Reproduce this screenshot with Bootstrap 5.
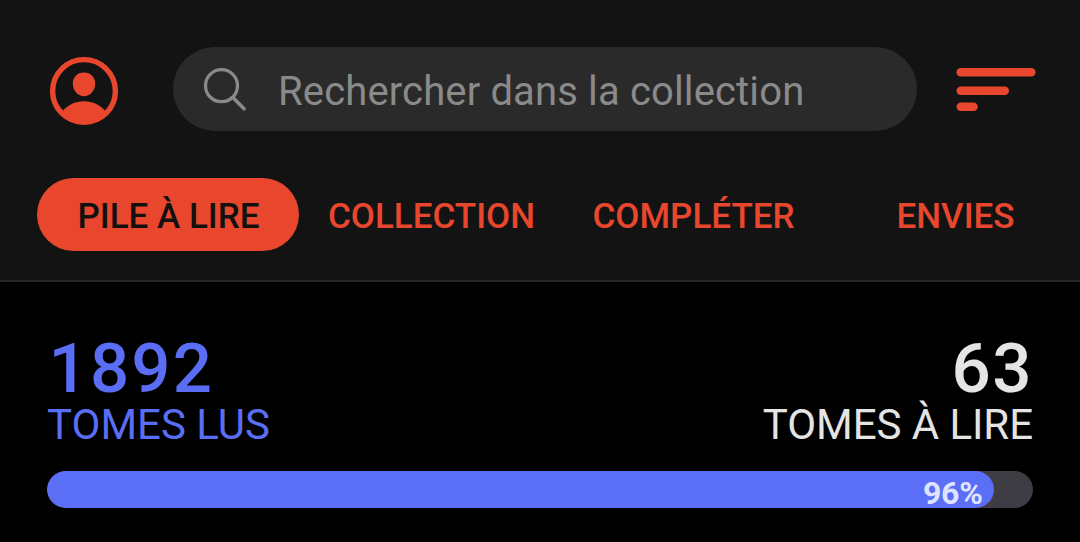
<!DOCTYPE html>
<html lang="fr">
<head>
<meta charset="utf-8">
<meta name="viewport" content="width=device-width, initial-scale=1">
<title>Pile à lire</title>
<link href="https://cdn.jsdelivr.net/npm/bootstrap@5.3.0/dist/css/bootstrap.min.css" rel="stylesheet">
<style>
  :root { --accent: #e8472e; --read: #5a6ef5; }
  body { background: #000; font-family: Roboto, "Liberation Sans", sans-serif; height: 542px; }
  .top-area { background: #131313; height: 282px; border-bottom: 2px solid #262626; padding-top: 47px; }
  .search-row { height: 84px; padding: 0 44px 0 49px; }
  .search-box { background: #2a2a2a; width: 744px; height: 84px; margin-left: 54px; padding-left: 30px; }
  .search-box input { color: #8a8a8a; font-size: 40px; line-height: 48px; letter-spacing: .14px; padding: 5px 0 0; margin-left: 31px; }
  .search-box input::placeholder { color: #8a8a8a; opacity: 1; }
  .tabs-row { margin: 47px 0 0 37px; }
  .tabs-row .nav-link { width: 262px; height: 73px; line-height: 73px; padding: 2px 0 0 3px; font-size: 35px; font-weight: 500; color: var(--accent); text-align: center; }
  .tabs-row .nav-link.active { background: var(--accent); color: #131010; padding-left: 1px; }
  .stats { padding: 55px 47px 0; }
  .figure-num { font-size: 69px; line-height: 64px; font-weight: 500; letter-spacing: 2.2px; }
  .figure-label { font-size: 42px; line-height: 48px; }
  .read { color: var(--read); }
  .read .figure-num { padding-left: 1.5px; }
  .unread { color: #e4e4e4; }
  .unread .figure-num { letter-spacing: 1.5px; }
  .unread .figure-label { letter-spacing: -.06px; }
  .progress { height: 37px; margin-top: 22px; background: #3e3d43; border-radius: 19px; }
  .progress-bar { background: #5a6ff6; border-radius: 19px; font-size: 32px; line-height: 37px; font-weight: 700; color: #dfe3ff; text-align: right; letter-spacing: -.3px; padding: 7px 11px 0 0; }
</style>
</head>
<body class="overflow-hidden">
<header class="top-area">
  <div class="search-row d-flex align-items-center">
    <svg class="flex-shrink-0 mt-1" width="70" height="70" viewBox="0 0 70 70" aria-label="Profil">
      <circle cx="35" cy="35" r="31.4" fill="none" stroke="#e8472e" stroke-width="5.4"/>
      <path fill="#e8472e" d="M35 16.500c6.700 0 11.200 4.800 11.200 10.800 0 7-4.700 12.900-11.200 12.900s-11.200-5.900-11.200-12.900c0-6 4.500-10.800 11.200-10.800zM13.200 55.500C18.500 49 26 45.200 35 45.200S51.500 49 56.800 55.500C51 63.500 44 67.500 35 67.500S19 63.500 13.200 55.500z"/>
    </svg>
    <div class="search-box d-flex align-items-center rounded-pill flex-shrink-0">
      <svg class="flex-shrink-0" width="44" height="44" viewBox="0 0 44 44" fill="none" stroke="#8a8a8a" stroke-linecap="round" aria-hidden="true">
        <circle cx="18.5" cy="18.7" r="16" stroke-width="3.3"/>
        <path d="M30 30.500L41 41.700" stroke-width="3.6"/>
      </svg>
      <input class="form-control-plaintext" type="text" placeholder="Rechercher dans la collection">
    </div>
    <svg class="ms-auto flex-shrink-0" width="80" height="44" viewBox="0 0 80 44" fill="#e8472e" aria-label="Trier">
      <rect x=".5" y=".9" width="79" height="8.5" rx="4.25"/>
      <rect x=".5" y="19.4" width="52.5" height="8.5" rx="4.25"/>
      <rect x=".5" y="35.5" width="21.3" height="8.5" rx="4.25"/>
    </svg>
  </div>
  <nav class="tabs-row nav nav-pills flex-nowrap">
    <a class="nav-link active rounded-pill flex-shrink-0" href="#">PILE À LIRE</a>
    <a class="nav-link flex-shrink-0" href="#">COLLECTION</a>
    <a class="nav-link flex-shrink-0" href="#">COMPLÉTER</a>
    <a class="nav-link flex-shrink-0" href="#">ENVIES</a>
  </nav>
</header>
<main class="stats">
  <div class="d-flex justify-content-between">
    <div class="read">
      <div class="figure-num">1892</div>
      <div class="figure-label">TOMES LUS</div>
    </div>
    <div class="unread text-end">
      <div class="figure-num">63</div>
      <div class="figure-label">TOMES À LIRE</div>
    </div>
  </div>
  <div class="progress">
    <div class="progress-bar overflow-visible" style="width:96%">96%</div>
  </div>
</main>
<script src="https://cdn.jsdelivr.net/npm/bootstrap@5.3.0/dist/js/bootstrap.bundle.min.js"></script>
</body>
</html>
